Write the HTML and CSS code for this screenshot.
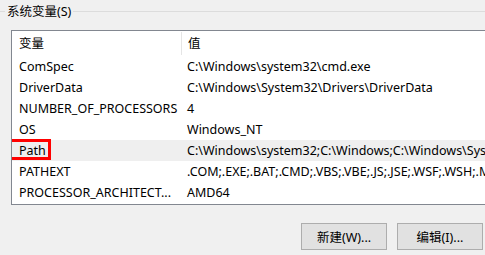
FILE: index.html
```html
<!DOCTYPE html>
<html lang="zh-CN">
<head>
  <meta charset="UTF-8">
  <title>系统变量</title>
  <link rel="stylesheet" href="styles.css">
</head>
<body>
  <div class="group">
    <!-- TITRE DU GROUPE -->
    <div class="group-title">
      <span class="line short"></span>
      <span class="label">系统变量(S)</span>
      <span class="line"></span>
    </div>

    <!-- LISTE DES VARIABLES -->
    <div class="var-list">
      <div class="row head">
        <div class="cell name">变量</div>
        <div class="cell value">值</div>
      </div>
      <div class="row">
        <div class="cell name">ComSpec</div>
        <div class="cell value">C:\Windows\system32\cmd.exe</div>
      </div>
      <div class="row">
        <div class="cell name">DriverData</div>
        <div class="cell value">C:\Windows\System32\Drivers\DriverData</div>
      </div>
      <div class="row">
        <div class="cell name">NUMBER_OF_PROCESSORS</div>
        <div class="cell value">4</div>
      </div>
      <div class="row">
        <div class="cell name">OS</div>
        <div class="cell value">Windows_NT</div>
      </div>
      <div class="row selected">
        <div class="cell name">Path<span class="mark"></span></div>
        <div class="cell value">C:\Windows\system32;C:\Windows;C:\Windows\System32\Wbem;C:\Windows\System32\WindowsPowerShell\v1.0\</div>
      </div>
      <div class="row">
        <div class="cell name">PATHEXT</div>
        <div class="cell value">.COM;.EXE;.BAT;.CMD;.VBS;.VBE;.JS;.JSE;.WSF;.WSH;.MSC</div>
      </div>
      <div class="row">
        <div class="cell name">PROCESSOR_ARCHITECT...</div>
        <div class="cell value">AMD64</div>
      </div>
    </div>

    <!-- BOUTONS -->
    <div class="actions">
      <button class="btn">新建(W)...</button>
      <button class="btn">编辑(I)...</button>
    </div>
  </div>
</body>
</html>
```

FILE: styles.css
```css
/* VARIABLES */
:root {
  --window-bg: #f0f0f0;
  --line-color: #dcdcdc;
  --list-border: #828790;
  --text-color: #000;
  --row-hover: #efefef;
  --font-family: "Noto Sans", "Noto Sans CJK SC", sans-serif;
}

* {
  box-sizing: border-box;
  margin: 0;
  padding: 0;
}

body {
  width: 485px;
  height: 255px;
  overflow: hidden;
  background: var(--window-bg);
  font-family: var(--font-family);
  font-size: 12.5px;
  color: var(--text-color);
}

/* TITRE DU GROUPE */
.group-title {
  display: flex;
  align-items: center;
  height: 23px;
  padding-top: 0;
}

.group-title .line {
  flex: 1;
  height: 1px;
  background: var(--line-color);
}

.group-title .line.short {
  flex: 0 0 5px;
}

.group-title .label {
  padding: 0 2px;
  line-height: 23px;
}

/* LISTE */
.var-list {
  margin: 7px 0 0 11px;
  width: 520px;
  height: 175px;
  background: #fff;
  border: 1px solid var(--list-border);
  overflow: hidden;
}

.row {
  display: flex;
  height: 21px;
  align-items: center;
  white-space: nowrap;
}

.row.head {
  height: 25px;
}

.row.selected {
  background: var(--row-hover);
}

.cell {
  line-height: 21px;
}

.cell.name {
  position: relative;
  flex: 0 0 169px;
  padding-left: 7px;
}

.cell.value {
  flex: 1;
  padding-left: 6px;
  overflow: hidden;
}

.row.head .cell.value {
  border-left: 1px solid #e5e5e5;
  line-height: 23px;
  padding-left: 6px;
}

/* CADRE ROUGE */
.mark {
  position: absolute;
  left: -5px;
  top: -1px;
  width: 44px;
  height: 21px;
  border: 3px solid #f00;
}

/* BOUTONS */
.actions {
  display: flex;
  justify-content: flex-end;
  gap: 10px;
  margin-top: 18px;
  padding-right: 2px;
}

.btn {
  width: 86px;
  height: 27px;
  background: #e1e1e1;
  border: 1px solid #adadad;
  font-family: var(--font-family);
  font-size: 12.5px;
  color: var(--text-color);
}
```
